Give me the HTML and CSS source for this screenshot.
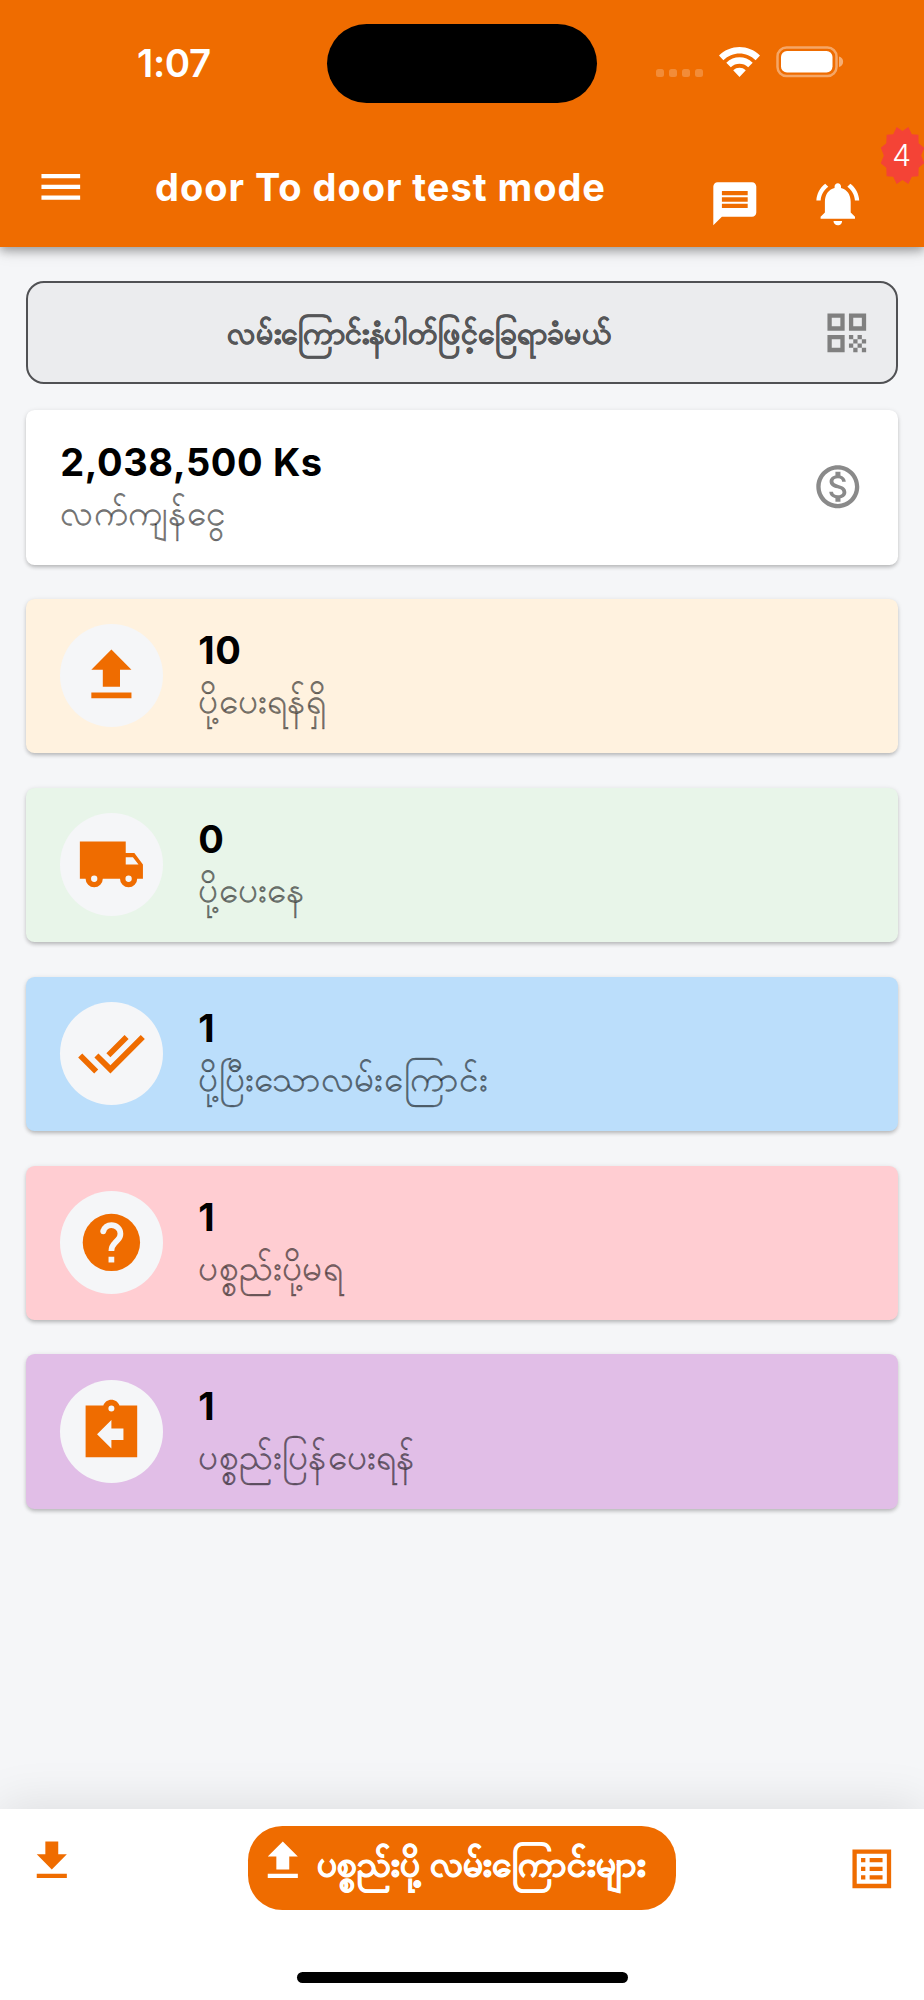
FILE: index.html
```html
<!DOCTYPE html>
<html lang="my">
<head>
<meta charset="utf-8">
<title>door To door test mode</title>
<link rel="stylesheet" href="styles.css">
</head>
<body>
<div class="screen">
  <header class="header">
    <div class="status">
      <span class="time">1:07</span>
      <span class="island"></span>
      <span class="signal"><i></i><i></i><i></i><i></i></span>
      <svg class="wifi" viewBox="0 0 41 30"><path d="M0 8.6C11.4-2.8 29.6-2.8 41 8.6l-4.4 4.6C27.7 4.100 13.300 4.100 4.400 13.200zM7.300 15.700c7.400-7.200 19-7.200 26.400 0l-4.500 4.600c-4.900-4.600-12.500-4.600-17.400 0zM14.200 23.200c3.500-3.300 9.100-3.300 12.600 0L20.500 30z"/></svg>
      <svg class="battery" viewBox="0 0 69 32"><rect x="1.500" y="1.500" width="59" height="28.500" rx="9" class="shell"/><rect x="5" y="5" width="51.500" height="21.500" rx="6"/><path d="M63 10.500c5.500 1.500 5.500 9 0 10.500z" class="nub"/></svg>
    </div>
    <div class="appbar">
      <svg class="icon menu" viewBox="0 0 24 24"><path d="M3 18h18v-2H3v2zm0-5h18v-2H3v2zm0-7v2h18V6H3z"/></svg>
      <h1 class="title">door To door test mode</h1>
      <svg class="icon chat" viewBox="0 0 24 24"><path d="M20 2H4c-1.100 0-1.990.9-1.990 2L2 22l4-4h14c1.100 0 2-.9 2-2V4c0-1.100-.9-2-2-2zm-2 12H6v-2h12v2zm0-3H6V9h12v2zm0-3H6V6h12v2z"/></svg>
      <div class="bell">
        <svg class="icon" viewBox="0 0 24 24"><path d="M7.580 4.080L6.150 2.650C3.750 4.480 2.170 7.300 2.030 10.500h2c.15-2.650 1.510-4.970 3.550-6.420zm12.390 6.420h2c-.15-3.200-1.730-6.020-4.120-7.850l-1.420 1.430c2.020 1.450 3.390 3.770 3.540 6.420zM18 11c0-3.070-1.640-5.640-4.500-6.320V4c0-.83-.67-1.500-1.500-1.500s-1.500.67-1.500 1.500v.68C7.630 5.360 6 7.920 6 11v5l-2 2v1h16v-1l-2-2v-5zm-6 11c.14 0 .27-.01.4-.04.65-.14 1.180-.58 1.440-1.180.1-.24.15-.5.15-.78h-4c.01 1.100.9 2 2.010 2z"/></svg>
        <div class="badge">
          <svg viewBox="-100 -100 200 200" preserveAspectRatio="none"><path d="M83 0 96.600 25.900 71.900 41.500 70.700 70.700 41.500 71.900 25.900 96.600 0 83-25.900 96.600-41.500 71.900-70.700 70.700-71.900 41.500-96.600 25.900-83 0-96.600-25.900-71.900-41.500-70.700-70.700-41.500-71.900-25.900-96.600 0-83 25.900-96.600 41.500-71.900 70.700-70.700 71.900-41.500 96.600-25.900z"/></svg>
          <span>4</span>
        </div>
      </div>
    </div>
  </header>

  <main class="content">
    <div class="search">
      <span class="search-text">လမ်းကြောင်းနံပါတ်ဖြင့်ခြေရာခံမယ်</span>
      <svg class="icon" viewBox="0 0 24 24"><path fill-rule="evenodd" d="M3 3h8v8H3zm2 2v4h4V5zM13 3h8v8h-8zm2 2v4h4V5zM3 13h8v8H3zm2 2v4h4v-4z"/><path d="M13 13h2v2h-2zm4 0h2v2h-2zm-2 2h2v2h-2zm4 0h2v2h-2zm-6 2h2v2h-2zm4 0h2v2h-2zm-2 2h2v2h-2zm4 0h2v2h-2z"/></svg>
    </div>

    <section class="card balance">
      <div class="info"><strong>2,038,500 Ks</strong><span>လက်ကျန်ငွေ</span></div>
      <svg class="icon" viewBox="0 0 24 24"><path d="M12 2C6.480 2 2 6.480 2 12s4.480 10 10 10 10-4.480 10-10S17.520 2 12 2zm0 18c-4.410 0-8-3.590-8-8s3.590-8 8-8 8 3.590 8 8-3.590 8-8 8zm.31-8.860c-1.770-.45-2.340-.94-2.340-1.670 0-.84.79-1.430 2.100-1.430 1.380 0 1.900.66 1.940 1.640h1.710c-.05-1.340-.87-2.570-2.490-2.970V5H10.900v1.690c-1.510.32-2.720 1.300-2.720 2.810 0 1.790 1.490 2.690 3.660 3.210 1.950.46 2.340 1.150 2.340 1.870 0 .53-.39 1.390-2.100 1.390-1.600 0-2.230-.72-2.320-1.640H8.040c.1 1.700 1.360 2.660 2.860 2.970V19h2.340v-1.670c1.520-.29 2.720-1.160 2.730-2.770-.01-2.200-1.900-2.960-3.660-3.420z"/></svg>
    </section>

    <section class="card pending">
      <div class="disc"><svg viewBox="0 0 24 24"><path d="M9 16h6v-6h4l-7-7-7 7h4zm-4 2h14v2H5z"/></svg></div>
      <div class="info"><strong>10</strong><span>ပို့ပေးရန်ရှိ</span></div>
    </section>
    <section class="card moving">
      <div class="disc"><svg viewBox="0 0 24 24"><path fill-rule="evenodd" d="M17 8V4H1v13h2a3 3 0 0 0 6 0h6a3 3 0 0 0 6 0h2v-5l-3-4zm0 1.500h2.500l1.960 2.500H17zM6 15.900a1.100 1.100 0 1 1 0 2.200 1.100 1.100 0 0 1 0-2.200zm12 0a1.100 1.100 0 1 1 0 2.200 1.100 1.100 0 0 1 0-2.200z"/></svg></div>
      <div class="info"><strong>0</strong><span>ပို့ပေးနေ</span></div>
    </section>
    <section class="card done">
      <div class="disc"><svg viewBox="0 0 24 24"><path d="M18 7l-1.410-1.410-6.340 6.340 1.410 1.410L18 7zm4.240-1.410L11.660 16.170 7.480 12l-1.410 1.410L11.660 19l12-12-1.420-1.410zM.41 13.410L6 19l1.410-1.410L1.830 12 .41 13.410z"/></svg></div>
      <div class="info"><strong>1</strong><span>ပို့ပြီးသောလမ်းကြောင်း</span></div>
    </section>
    <section class="card failed">
      <div class="disc"><svg viewBox="0 0 24 24"><circle cx="12" cy="12" r="10"/><path class="hook" d="M9.150 8.100C9.600 6.850 10.700 6 12 6c1.750 0 3.150 1.300 3.150 3 0 .85-.35 1.550-.9 2.100L13.200 12.200C12.400 13 12 13.700 12 15"/><circle class="pale" cx="9.150" cy="8.150" r="1"/><path class="pale" d="M11 17h2v2h-2z"/></svg></div>
      <div class="info"><strong>1</strong><span>ပစ္စည်းပို့မရ</span></div>
    </section>
    <section class="card returned">
      <div class="disc"><svg viewBox="0 0 24 24"><path fill-rule="evenodd" d="M21 3h-6.180C14.400 1.840 13.300 1 12 1s-2.400.84-2.820 2H3v18h18zM12 3a1.050 1.050 0 1 1 0 2.100A1.050 1.050 0 0 1 12 3zm0 15l-5-5 5-5v3h4.200v4H12z"/></svg></div>
      <div class="info"><strong>1</strong><span>ပစ္စည်းပြန်ပေးရန်</span></div>
    </section>
  </main>

  <footer class="bottom">
    <div class="actions">
      <svg class="icon download" viewBox="0 0 24 24"><path d="M19 9h-4V3H9v6H5l7 7zM5 18v2h14v-2z"/></svg>
      <div class="button">
        <svg class="icon" viewBox="0 0 24 24"><path d="M9 16h6v-6h4l-7-7-7 7h4zm-4 2h14v2H5z"/></svg>
        <span>ပစ္စည်းပို့ လမ်းကြောင်းများ</span>
      </div>
      <svg class="icon list" viewBox="0 0 24 24"><path fill-rule="evenodd" d="M3 3h18v18H3zm2 2v14h14V5zM7 7h2v2H7zm4 0h6v2h-6zm-4 4h2v2H7zm4 0h6v2h-6zm-4 4h2v2H7zm4 0h6v2h-6z"/></svg>
    </div>
    <div class="home"></div>
  </footer>
</div>
</body>
</html>
```
FILE: styles.css
```css
* { box-sizing: border-box; }
body { margin: 0; font-family: Inter, sans-serif; }
.screen { width: 924px; height: 2000px; display: flex; flex-direction: column; background: #f5f6f8; overflow: hidden; }
svg { display: block; flex: none; fill: currentColor; }
.icon { width: 51.600px; height: 51.600px; }

.header { height: 246.500px; flex: none; background: #ef6c00; color: #fff; box-shadow: 0 4px 9px rgba(0,0,0,.3), 0 3px 18px rgba(0,0,0,.12); }
.status { height: 127px; display: flex; align-items: flex-start; padding-top: 24px; }
.time { width: 190px; margin-left: 137px; padding-top: 15px; font-size: 38.500px; line-height: 48px; font-weight: 600; letter-spacing: -.4px; }
.island { width: 270px; height: 79px; border-radius: 40px; background: #000; }
.signal { display: flex; gap: 5px; margin: 45px 0 0 59px; }
.signal i { width: 8px; height: 8px; border-radius: 2.500px; background: rgba(255,255,255,.22); }
.wifi { width: 41px; height: 30px; margin: 23px 0 0 16px; }
.battery { width: 69px; height: 32px; margin: 22px 0 0 16px; }
.shell { fill: none; stroke: rgba(255,255,255,.4); stroke-width: 2.500; }
.nub { fill: rgba(255,255,255,.45); }
.appbar { height: 119.500px; display: flex; align-items: flex-start; }
.menu { margin: 34px 0 0 34.500px; }
.title { width: 554px; margin: 36px 0 0 69px; font-size: 38px; line-height: 48px; font-weight: 700; letter-spacing: .96px; white-space: nowrap; }
.chat { margin-top: 51px; }
.bell { position: relative; margin: 51px 0 0 51.500px; }
.badge { position: absolute; left: 68px; top: -52px; width: 45px; height: 59px; display: flex; align-items: center; justify-content: center; }
.badge svg { position: absolute; inset: 0; width: 45px; height: 59px; color: #f44336; }
.badge span { position: relative; left: -1px; top: -1px; font-size: 30px; font-weight: 300; }

.content { flex: 1; display: flex; flex-direction: column; padding: 34.500px 26px 0; }
.search { height: 103px; flex: none; display: flex; align-items: center; border: 2px solid #505154; border-radius: 18px; background: #ebecee; color: #808080; padding-right: 23.500px; }
.search-text { flex: 1; text-align: center; color: #555658; font-size: 30px; font-weight: 600; line-height: 50px; padding-right: 9px; white-space: nowrap; -webkit-text-stroke: .5px currentColor; }
.card { height: 154.500px; flex: none; display: flex; align-items: flex-start; margin-top: 34.400px; padding: 25.500px 34.300px 0; border-radius: 8.600px; background: #fff; box-shadow: 0 3px 4px -1px rgba(0,0,0,.2), 0 1px 5px rgba(0,0,0,.12); }
.balance { margin-top: 26px; }
.balance .icon { margin: 25.500px 0 0 auto; color: #8a8a8a; }
.disc { width: 103px; height: 103px; margin-right: 35px; border-radius: 50%; background: #f5f6f8; color: #ef6c00; display: flex; align-items: center; justify-content: center; }
.disc svg { width: 68.800px; height: 68.800px; }
.hook { fill: none; stroke: #f5f6f8; stroke-width: 2; }
.pale { fill: #f5f6f8; }
.info { display: flex; flex-direction: column; }
.info strong { font-size: 38px; line-height: 48px; font-weight: 700; color: #000; letter-spacing: .6px; margin-top: 2px; }
.info span { font-size: 35px; line-height: 53px; font-weight: 400; letter-spacing: .3px; color: #0000008a; white-space: nowrap; -webkit-text-stroke: .35px #0000008a; }
.pending { background: #fff2df; }
.moving { background: #e8f5e9; }
.done { background: #bbdefb; }
.failed { background: #ffcdd2; }
.returned { background: #e1bee7; }

.bottom { height: 191px; flex: none; display: flex; flex-direction: column; background: #fff; color: #ef6c00; box-shadow: 0 -4px 45px rgba(0,0,0,.1); }
.actions { height: 163px; display: flex; align-items: flex-start; padding-top: 17px; }
.download { margin: 8.500px 170.800px 0 25.800px; }
.button { width: 427.500px; height: 83.500px; border-radius: 34.400px; background: #ef6c00; color: #fff; display: flex; align-items: flex-start; padding: 8.500px 0 0 9px; }
.button span { margin-left: 8px; font-size: 35px; line-height: 57px; font-weight: 600; letter-spacing: .2px; white-space: nowrap; -webkit-text-stroke: .9px currentColor; }
.list { margin: 16.500px 0 0 170.500px; }
.home { width: 331px; height: 11px; margin: 0 auto; border-radius: 6px; background: #000; }
```
